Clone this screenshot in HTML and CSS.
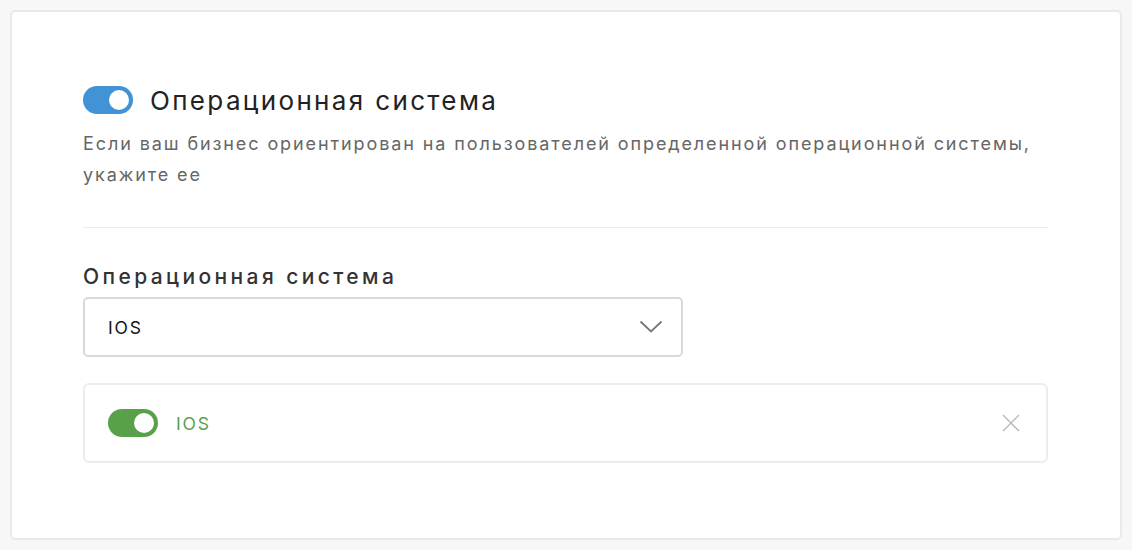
FILE: index.html
```html
<!DOCTYPE html>
<html lang="ru">
<head>
<meta charset="utf-8">
<link rel="stylesheet" href="styles.css">
</head>
<body>
<div class="card">
  <div class="head">
    <span class="toggle toggle-blue"><span class="knob"></span></span>
    <h2 class="title">Операционная система</h2>
  </div>
  <p class="desc">Если ваш бизнес ориентирован на пользователей определенной операционной системы, укажите ее</p>
  <div class="divider"></div>
  <div class="label">Операционная система</div>
  <div class="select">
    <span class="select-value">IOS</span>
    <svg class="chevron" width="24" height="14" viewBox="0 0 24 14"><path d="M1.5 1.5 L12 11.5 L22.5 1.5" fill="none" stroke="#777" stroke-width="1.8"/></svg>
  </div>
  <div class="item">
    <span class="toggle toggle-green"><span class="knob"></span></span>
    <span class="item-name">IOS</span>
    <svg class="close" width="18" height="18" viewBox="0 0 18 18"><path d="M1 1 L17 17 M17 1 L1 17" stroke="#b8b8b8" stroke-width="1.4" fill="none"/></svg>
  </div>
</div>
</body>
</html>
```
FILE: styles.css
```css
html, body {
  margin: 0;
  padding: 0;
  background: #f7f7f7;
}
body {
  padding: 10px 10px 10px 10px;
  font-family: "Inter", "Open Sans", sans-serif;
  color: #222;
}
.card {
  box-sizing: border-box;
  width: 1112px;
  height: 530px;
  background: #fff;
  border: 2px solid #e9e9e9;
  border-radius: 5px;
  padding: 73px 72px 0 71px;
}
.head {
  display: flex;
  align-items: center;
  gap: 17px;
  height: 30px;
}
.toggle {
  display: inline-flex;
  align-items: center;
  justify-content: flex-end;
  box-sizing: border-box;
  width: 50px;
  height: 28px;
  border-radius: 14px;
  padding: 4px;
  flex: none;
}
.toggle-blue { background: #4193d6; }
.toggle-green { background: #59a04a; }
.knob {
  width: 20px;
  height: 20px;
  border-radius: 50%;
  background: #fff;
}
.title {
  margin: 0;
  font-size: 26px;
  font-weight: 400;
  color: #222;
  letter-spacing: 2.35px;
}
.desc {
  margin: 13px 0 0 0;
  font-size: 18px;
  line-height: 31px;
  color: #666;
  letter-spacing: 1.9px;
  max-width: 960px;
}
.divider {
  height: 1px;
  background: #ededed;
  margin-top: 37px;
}
.label {
  margin-top: 36px;
  font-size: 21px;
  font-weight: 500;
  letter-spacing: 3.4px;
  color: #333;
  line-height: 26px;
}
.select {
  box-sizing: border-box;
  margin-top: 7px;
  width: 600px;
  height: 60px;
  border: 2px solid #d9d9d9;
  border-radius: 5px;
  display: flex;
  align-items: center;
  justify-content: space-between;
  padding: 0 18px 0 23px;
}
.select-value {
  font-size: 17.5px;
  letter-spacing: 1.8px;
  color: #111;
}
.item {
  box-sizing: border-box;
  margin-top: 26px;
  height: 80px;
  border: 2px solid #ececec;
  border-radius: 6px;
  display: flex;
  align-items: center;
  padding: 0 26px 0 23px;
}
.item-name {
  margin-left: 18px;
  font-size: 17.5px;
  letter-spacing: 1.8px;
  color: #59a04a;
  flex: 1;
}
.close { flex: none; }
```
